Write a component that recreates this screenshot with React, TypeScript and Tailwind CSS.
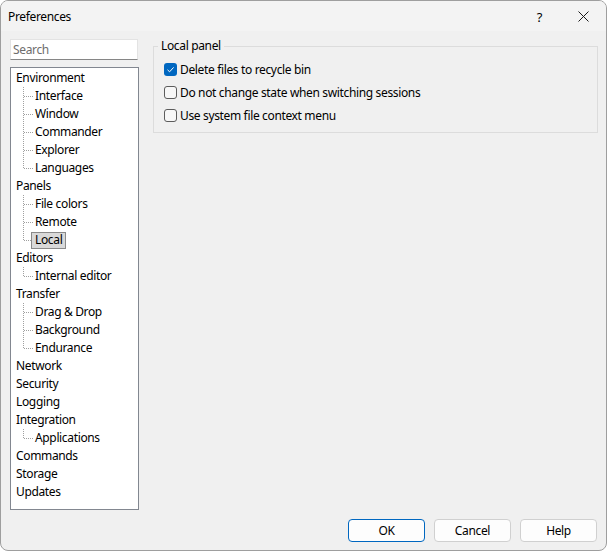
import type { FC } from 'react'

type TreeItem = { label: string; children?: string[] }

const tree: TreeItem[] = [
  { label: 'Environment', children: ['Interface', 'Window', 'Commander', 'Explorer', 'Languages'] },
  { label: 'Panels', children: ['File colors', 'Remote', 'Local'] },
  { label: 'Editors', children: ['Internal editor'] },
  { label: 'Transfer', children: ['Drag & Drop', 'Background', 'Endurance'] },
  { label: 'Network' },
  { label: 'Security' },
  { label: 'Logging' },
  { label: 'Integration', children: ['Applications'] },
  { label: 'Commands' },
  { label: 'Storage' },
  { label: 'Updates' },
]

const options = [
  { label: 'Delete files to recycle bin', checked: true },
  { label: 'Do not change state when switching sessions', checked: false },
  { label: 'Use system file context menu', checked: false },
]

const TreeLine: FC<{ last: boolean }> = ({ last }) => (
  <svg width="11" height="18" className="shrink-0" aria-hidden>
    <line
      x1="0.5"
      y1="0"
      x2="0.5"
      y2={last ? 9 : 18}
      stroke="#a0a0a0"
      strokeWidth="1"
      strokeDasharray="1 1"
    />
    <line x1="1" y1="9.5" x2="10" y2="9.5" stroke="#a0a0a0" strokeWidth="1" strokeDasharray="1 1" />
  </svg>
)

const Checkbox: FC<{ checked: boolean }> = ({ checked }) =>
  checked ? (
    <span className="flex h-[13px] w-[13px] shrink-0 items-center justify-center rounded-[3px] bg-[#0067c0]">
      <svg width="9" height="9" viewBox="0 0 9 9" aria-hidden>
        <path d="M1.5 4.8 L3.6 6.8 L7.6 2.4" fill="none" stroke="#ffffff" strokeWidth="1" />
      </svg>
    </span>
  ) : (
    <span className="h-[13px] w-[13px] shrink-0 rounded-[3px] border border-[#5c5c5c] bg-[#f7f7f7]" />
  )

const Button: FC<{ label: string; primary?: boolean }> = ({ label, primary }) => (
  <button
    type="button"
    className={
      primary
        ? 'h-[23px] w-[77px] rounded-[4px] border border-[#0067c0] bg-[#fdfdfd] text-[12px] text-black'
        : 'h-[23px] w-[77px] rounded-[4px] border border-[#d0d0d0] bg-[#fdfdfd] text-[12px] text-black'
    }
  >
    {label}
  </button>
)

export default function App() {
  return (
    <div
      className="flex h-[551px] w-[607px] flex-col overflow-hidden rounded-[8px] border border-[#9e9e9e] bg-[#f0f0f0] text-[12px] leading-[16px] tracking-[-0.35px] text-black"
      style={{ fontFamily: '"Segoe UI", "Noto Sans", sans-serif' }}
    >
      {/* title bar */}
      <div className="flex h-[30px] shrink-0 items-center bg-[#f3f3f3]">
        <span className="ml-[7px] mt-[1px]">Preferences</span>
        <span className="ml-auto mr-[36px] mt-[1px] text-[13px]">?</span>
        <svg width="11" height="11" viewBox="0 0 11 11" className="mr-[17px]" aria-hidden>
          <path d="M0.5 0.5 L10.5 10.5 M10.5 0.5 L0.5 10.5" stroke="#1a1a1a" strokeWidth="1" />
        </svg>
      </div>

      <div className="flex flex-1 flex-col">
        <div className="flex">
          {/* left column */}
          <div className="ml-[9px] flex w-[129px] flex-col">
            <div className="mt-[8px] flex h-[21px] w-[128px] items-center border border-[#e3e3e3] border-b-[#868686] bg-white pl-[2px] text-[#6d6d6d]">
              Search
            </div>
            <div className="mt-[7px] h-[443px] border border-[#828790] bg-white pl-[5px] pt-[1px]">
              {tree.map(item => (
                <div key={item.label}>
                  <div className="flex h-[18px] items-center">{item.label}</div>
                  {item.children?.map((child, i) => (
                    <div key={child} className="flex h-[18px] items-center pl-[7px]">
                      <TreeLine last={i === item.children!.length - 1} />
                      {child === 'Local' ? (
                        <span className="ml-[-3px] flex h-[17px] items-center border border-[#8a8a8a] bg-[#d9d9d9] pl-[3px] pr-[3px]">
                          {child}
                        </span>
                      ) : (
                        <span className="ml-[1px]">{child}</span>
                      )}
                    </div>
                  ))}
                </div>
              ))}
            </div>
          </div>

          {/* right column */}
          <fieldset className="ml-[14px] mt-[7px] h-[95px] w-[445px] border border-[#dcdcdc] pl-[10px] pb-[4px]">
            <legend className="ml-[-6px] px-[3px]">Local panel</legend>
            <div className="pt-[4px]">
              {options.map(opt => (
                <label key={opt.label} className="flex h-[23px] items-center gap-[3px]">
                  <Checkbox checked={opt.checked} />
                  <span>{opt.label}</span>
                </label>
              ))}
            </div>
          </fieldset>
        </div>

        {/* buttons */}
        <div className="mr-[9px] mt-[9px] flex justify-end gap-[9px]">
          <Button label="OK" primary />
          <Button label="Cancel" />
          <Button label="Help" />
        </div>
      </div>
    </div>
  )
}
